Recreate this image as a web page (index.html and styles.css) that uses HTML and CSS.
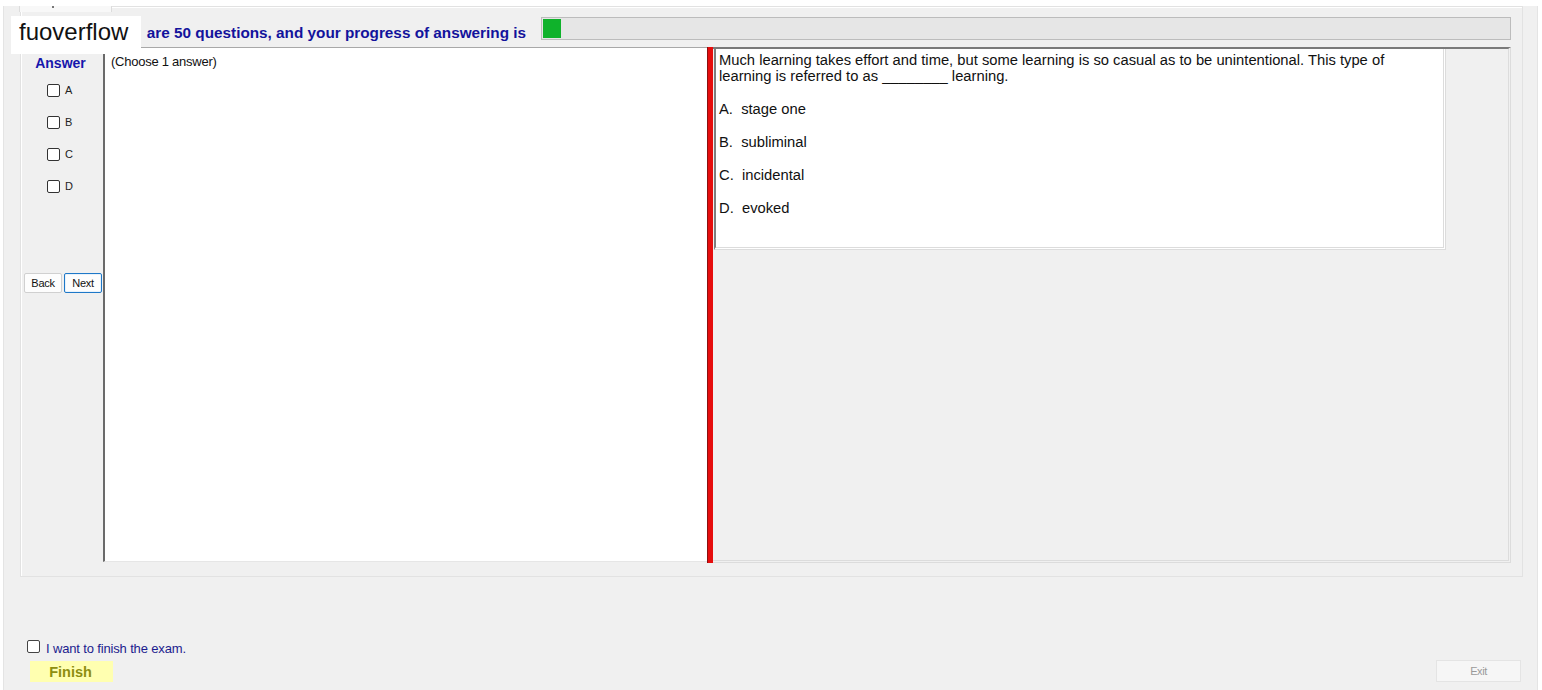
FILE: index.html
```html
<!DOCTYPE html>
<html>
<head>
<meta charset="utf-8">
<link rel="stylesheet" href="styles.css">
</head>
<body>
<div class="window">
  <div class="tab"><span class="tab-mark"></span></div>
  <div class="group">
    <div class="header">
      <div class="title">are 50 questions, and your progress of answering is</div>
      <div class="progress"><div class="fill"></div></div>
    </div>
    <div class="main">
      <div class="answers">
        <div class="ans-title">Answer</div>
        <div class="opt"><span class="cb"></span><span>A</span></div>
        <div class="opt"><span class="cb"></span><span>B</span></div>
        <div class="opt"><span class="cb"></span><span>C</span></div>
        <div class="opt"><span class="cb"></span><span>D</span></div>
        <div class="nav">
          <button class="btn">Back</button>
          <button class="btn focus">Next</button>
        </div>
      </div>
      <div class="textbox">(Choose 1 answer)</div>
      <div class="splitter"></div>
      <div class="qpanel">
        <div class="qbox">
          <p class="question">Much learning takes effort and time, but some learning is so casual as to be unintentional. This type of learning is referred to as ________ learning.</p>
          <p class="choice">A.&nbsp; stage one</p>
          <p class="choice">B.&nbsp; subliminal</p>
          <p class="choice">C.&nbsp; incidental</p>
          <p class="choice">D.&nbsp; evoked</p>
        </div>
      </div>
    </div>
  </div>
  <div class="footer">
    <div class="finish-check"><span class="cb"></span><span class="finish-label">I want to finish the exam.</span></div>
    <div class="footer-row">
      <button class="finish">Finish</button>
      <button class="exit">Exit</button>
    </div>
  </div>
  <div class="watermark">fuoverflow</div>
</div>
</body>
</html>
```

FILE: styles.css
```css
* { box-sizing: border-box; }
html, body { margin: 0; padding: 0; background: #ffffff; }
body { font-family: "Liberation Sans", Arial, sans-serif; color: #000; }

.window {
  position: relative;
  margin-left: 3px;
  width: 1535px;
  height: 686px;
  background: #f0f0f0;
  border-left: 1px solid #e4e4e4;
  border-right: 1px solid #e4e4e4;
  border-bottom: 1px solid #e4e4e4;
}

.tab {
  position: absolute;
  left: 15px;
  top: 0;
  width: 93px;
  height: 6px;
  background: #f8f8f8;
  border-left: 1px solid #dcdcdc;
  border-right: 1px solid #dcdcdc;
}
.tab-mark {
  position: absolute;
  left: 32px;
  top: 0;
  width: 2px;
  height: 2px;
  background: #777;
}

.group {
  margin: 6px 0 0 16px;
  width: 1503px;
  height: 571px;
  border: 1px solid #e2e2e2;
  box-shadow: inset 1px 1px 0 #ffffff;
  padding: 10px 11px 0 1px;
}

.header {
  display: flex;
  height: 23px;
  align-items: center;
}
.title {
  width: 519px;
  padding-right: 15px;
  text-align: right;
  white-space: nowrap;
  font-weight: bold;
  font-size: 15.3px;
  color: #13139c;
  padding-top: 8px;
}
.progress {
  flex: 1;
  height: 23px;
  background: #e6e6e6;
  border: 1px solid #bcbcbc;
  padding: 1px;
}
.fill {
  width: 18px;
  height: 100%;
  background: #0fb22b;
}

.main {
  display: flex;
  margin-top: 7px;
  height: 515px;
}

.answers {
  width: 81px;
  padding: 7px 0 0 2px;
  display: flex;
  flex-direction: column;
}
.ans-title {
  height: 18px;
  line-height: 18px;
  text-align: center;
  padding-right: 6px;
  font-weight: bold;
  font-size: 14px;
  color: #1616ac;
  margin-bottom: 2px;
}
.opt {
  height: 32px;
  display: flex;
  align-items: center;
  padding-left: 23px;
  font-size: 11px;
  color: #222;
}
.cb {
  display: inline-block;
  width: 13px;
  height: 13px;
  border: 1px solid #333;
  border-radius: 2px;
  background: #fff;
  margin-right: 5px;
  flex: none;
}
.nav {
  display: flex;
  gap: 2px;
  margin-top: 71px;
}
.btn {
  width: 38px;
  height: 20px;
  padding: 0;
  font-family: "Liberation Sans", Arial, sans-serif;
  font-size: 11px;
  letter-spacing: -0.3px;
  color: #111;
  background: #fdfdfd;
  border: 1px solid #d0d0d0;
  border-radius: 2px;
}
.btn.focus {
  border: 1px solid #1e78c8;
  box-shadow: inset 0 0 0 1px #e8f2fb;
}

.textbox {
  width: 604px;
  height: 515px;
  background: #fff;
  border-top: 1px solid #a8a8a8;
  border-left: 2px solid #6a6a6a;
  border-bottom: 1px solid #e6e6e6;
  padding: 6px 0 0 6px;
  font-size: 13px;
  line-height: 15px;
  letter-spacing: -0.25px;
  color: #111;
}

.splitter {
  width: 6px;
  height: 516px;
  background: #e60d0d;
  border-left: 1px solid #8a1010;
}

.qpanel {
  flex: 1;
  height: 516px;
  border-top: 2px solid #7a7a7a;
  border-right: 3px double #dcdcdc;
  border-bottom: 3px double #dcdcdc;
}
.qbox {
  margin-left: 1px;
  width: 732px;
  height: 201px;
  background: #fff;
  border-left: 2px solid #7e7e7e;
  border-right: 3px double #dcdcdc;
  border-bottom: 3px double #dcdcdc;
  padding: 3px 20px 0 3px;
  font-size: 14.75px;
  line-height: 16px;
  color: #111;
}
.question { margin: 0 0 17px 0; }
.choice { margin: 0 0 17px 0; }

.footer {
  position: relative;
  padding: 62px 0 0 23px;
}
.finish-check {
  display: flex;
  align-items: center;
  height: 14px;
}
.finish-check .cb {
  margin-right: 6px;
  border-color: #444;
}
.finish-label {
  font-size: 13px;
  letter-spacing: -0.15px;
  color: #1c1c8e;
  padding-top: 4px;
}
.footer-row {
  display: flex;
  justify-content: space-between;
  margin-top: 7px;
  padding-right: 16px;
}
.finish {
  width: 83px;
  height: 21px;
  margin-left: 3px;
  padding: 0 2px 0 0;
  border: none;
  background: #ffffb0;
  font-family: "Liberation Sans", Arial, sans-serif;
  font-weight: bold;
  font-size: 14.5px;
  color: #8e8e10;
  margin-top: 1px;
}
.exit {
  width: 85px;
  height: 22px;
  padding: 0;
  background: #f6f6f6;
  border: 1px solid #e4e4e4;
  font-family: "Liberation Sans", Arial, sans-serif;
  font-size: 11px;
  letter-spacing: -0.4px;
  color: #9a9a9a;
}

.watermark {
  position: absolute;
  left: 7px;
  top: 10px;
  width: 130px;
  height: 38px;
  background: #fff;
  font-size: 24px;
  line-height: 32px;
  padding: 0 0 6px 8px;
  color: #111;
}
```
